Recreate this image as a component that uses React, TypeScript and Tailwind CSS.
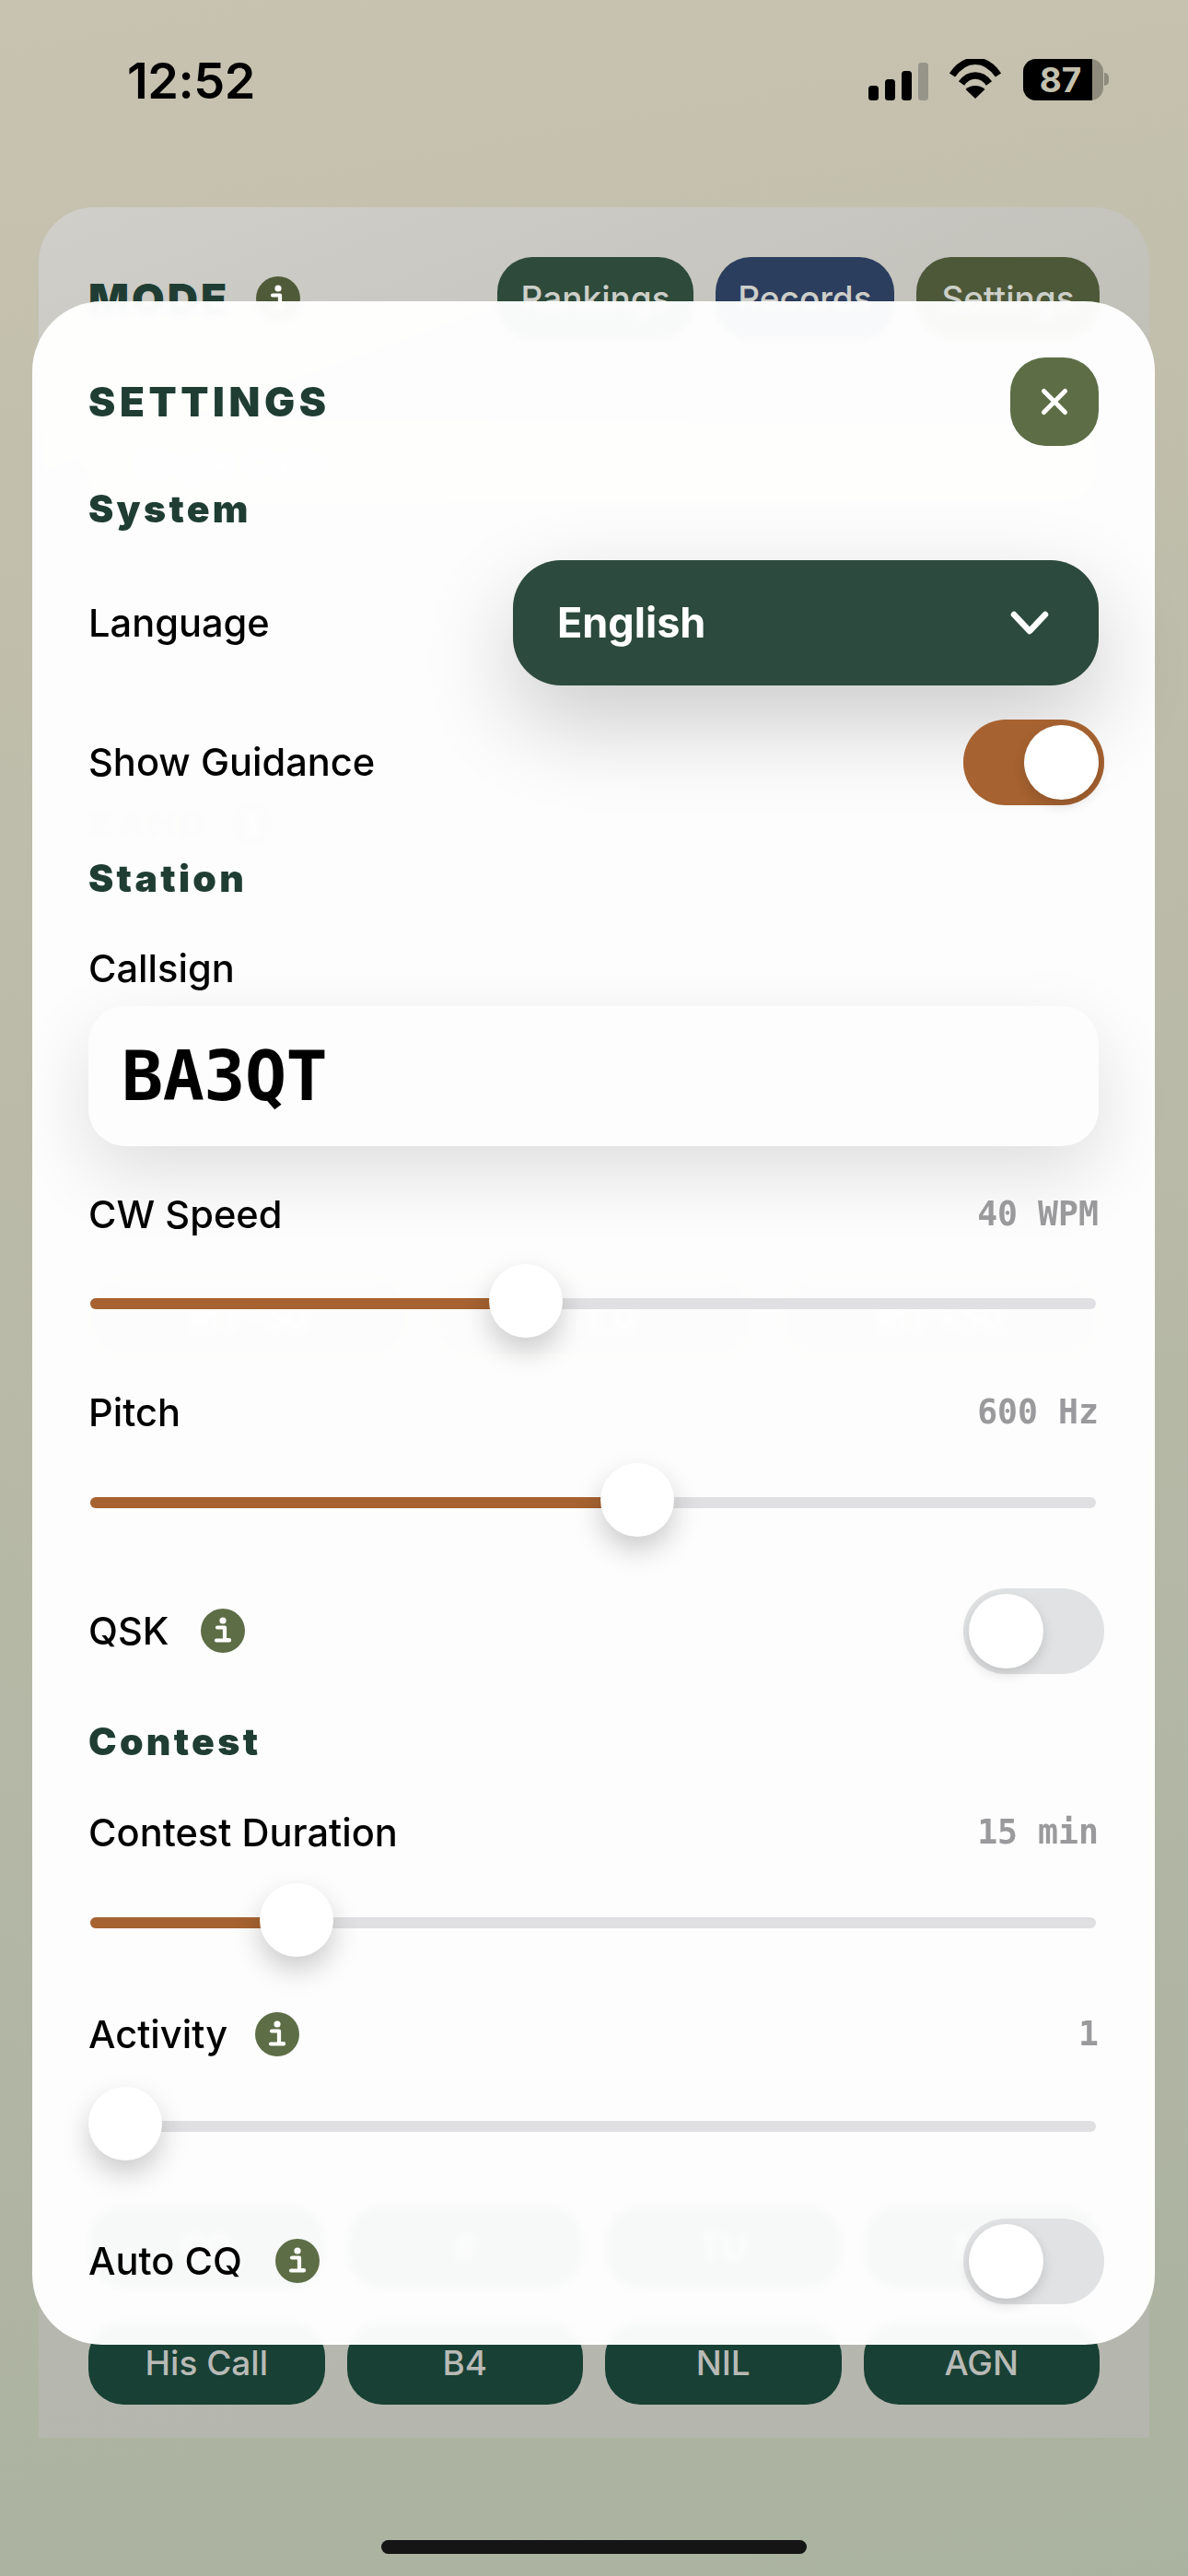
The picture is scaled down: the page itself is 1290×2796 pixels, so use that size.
const sans = "font-['Inter','Noto_Sans',sans-serif]";

function InfoIcon({ size = 48, color = "#5d6e47" }: { size?: number; color?: string }) {
  return (
    <svg width={size} height={size} viewBox="0 0 48 48" className="shrink-0">
      <circle cx="24" cy="24" r="24" fill={color} />
      <circle cx="24" cy="13" r="3.6" fill="#fff" />
      <path d="M18 20.5h8v13.5h5M17 34.5h14" stroke="#fff" strokeWidth="4.2" fill="none" strokeLinecap="round" strokeLinejoin="round" />
    </svg>
  );
}

function Toggle({ on }: { on?: boolean }) {
  return (
    <div
      className={`flex h-[93px] w-[153px] shrink-0 -mr-[6px] items-center rounded-[46px] px-[6px] ${
        on ? "justify-end bg-[#a66230]" : "justify-start bg-[#e1e2e3]"
      }`}
    >
      <div className="h-[81px] w-[81px] rounded-full bg-white shadow-[0_6px_14px_rgba(0,0,0,0.14)]" />
    </div>
  );
}

function Slider({ value, className }: { value: number; className?: string }) {
  const left = value * 1018;
  return (
    <div className={`relative h-[80px] ${className}`}>
      <div className="absolute left-[2px] right-[3px] top-[37px] h-[12px] overflow-hidden rounded-full bg-[#e0e0e2]">
        <div className="h-full bg-[#a66230]" style={{ width: left + 38 }} />
      </div>
      <div
        className="absolute top-0 h-[80px] w-[80px] rounded-full bg-white shadow-[0_14px_30px_rgba(0,0,0,0.2)]"
        style={{ left }}
      />
    </div>
  );
}

function SectionTitle({ children, className }: { children: React.ReactNode; className?: string }) {
  return (
    <h3 className={`h-[44px] text-[41px] font-black leading-[44px] tracking-[3.3px] text-[#1f3d33] ${className}`}>
      {children}
    </h3>
  );
}

function ValueRow({ label, value, info, className }: { label: string; value: string; info?: boolean; className?: string }) {
  return (
    <div className={`flex h-[44px] items-center justify-between ${className}`}>
      <div className="flex items-center gap-[30px]">
        <span className="text-[41.6px] font-medium leading-[44px] text-black">{label}</span>
        {info && <InfoIcon />}
      </div>
      <span className="font-['DejaVu_Sans_Mono',monospace] text-[36.5px] font-bold leading-[44px] text-[#9a9a9c]">{value}</span>
    </div>
  );
}

function StatusBar() {
  return (
    <div className="flex h-[225px] items-start justify-between pl-[138px] pr-[86px]">
      <span className="mt-[57px] text-[54px] font-semibold leading-[62px] tracking-[-0.5px] text-black">12:52</span>
      <div className="mt-[64px] flex items-start">
        <svg width="66" height="44" viewBox="0 0 66 44" className="mt-[2px]">
          <rect x="1" y="27" width="11" height="16" rx="3.5" fill="#000" />
          <rect x="19" y="20" width="11" height="23" rx="3.5" fill="#000" />
          <rect x="37" y="11" width="11" height="32" rx="3.5" fill="#000" />
          <rect x="55" y="2" width="11" height="41" rx="3.5" fill="#97958a" />
        </svg>
        <svg width="58" height="44" viewBox="0 0 58 44" className="ml-[22px]">
          <path d="M4 17.5C18-3 40-3 54 17.5" stroke="#000" strokeWidth="7.5" fill="none" />
          <path d="M14 26.5C22 15 36 15 44 26.5" stroke="#000" strokeWidth="7.5" fill="none" />
          <path d="M29 43L18.5 33C24 27.5 34 27.5 39.5 33Z" fill="#000" />
        </svg>
        <div className="relative ml-[23px] flex h-[45px] w-[87px] overflow-hidden rounded-[14px] bg-[#8e8b7c]">
          <div className="flex h-full w-[75px] items-center justify-center bg-black pl-[6px] text-[37px] font-bold leading-none text-[#c4c0ae]">
            87
          </div>
        </div>
        <div className="ml-[1px] mt-[15px] h-[14px] w-[5px] rounded-r-full bg-[#8e8b7c]" />
      </div>
    </div>
  );
}

// the app behind the sheet, only its top and bottom edges show
function BackPanel() {
  const keys = ["CQ", "#", "TU", "My"];
  const keys2 = ["His Call", "B4", "NIL", "AGN"];
  return (
    <div className="mx-[42px] h-[2421px] overflow-hidden rounded-t-[60px] bg-[linear-gradient(160deg,#d0cfca_0%,#b9b9b1_30%,#b5b6ae_100%)] px-[54px] pt-[54px]">
      <div className="flex items-center justify-between">
        <div className="flex items-center gap-[29px]">
          <span className="text-[46px] font-black tracking-[3px] text-[#1f3d33]">MODE</span>
          <InfoIcon color="#4f5a39" />
        </div>
        <div className="flex gap-[24px] text-[37px] font-medium text-[#cdcfc9]">
          <div className="flex h-[90px] w-[213px] items-center justify-center rounded-[38px] bg-[#2d4a3a]">Rankings</div>
          <div className="flex h-[90px] w-[194px] items-center justify-center rounded-[38px] bg-[#2c3e5e]">Records</div>
          <div className="flex h-[90px] w-[199px] items-center justify-center rounded-[38px] bg-[#4d5838]">Settings</div>
        </div>
      </div>
      <div className="mt-[87px] flex h-[92px] items-center rounded-[40px] bg-[#c9c9c4] pl-[48px] text-[38px] text-white">Single Calls</div>
      <div className="mt-[317px] flex items-center gap-[24px]">
        <span className="text-[40px] font-black tracking-[3px] text-[#9a9a94]">BAND</span>
        <InfoIcon color="#a0a098" />
      </div>
      <div className="mt-[46px] flex items-center justify-between text-[40px] text-[#b0b0aa]">
        <span>RX Bandwidth</span>
        <span className="font-['DejaVu_Sans_Mono',monospace] text-[36px]">500 Hz</span>
      </div>
      <div className="mt-[353px] grid grid-cols-3 gap-[28px]">
        {["RIT -50", "RIT 0", "RIT +50"].map((k) => (
          <div key={k} className="flex h-[91px] items-center justify-center rounded-[40px] bg-[#a8aaa4] text-[36px] text-white">{k}</div>
        ))}
      </div>
      <div className="mt-[919px] grid grid-cols-4 gap-[24px]">
        {keys.map((k) => (
          <div key={k} className="flex h-[90px] items-center justify-center rounded-[38px] bg-[#184034] text-[37px] font-medium text-[#b8bab6]">{k}</div>
        ))}
      </div>
      <div className="mt-[36px] grid grid-cols-4 gap-[24px]">
        {keys2.map((k) => (
          <div key={k} className="flex h-[90px] items-center justify-center rounded-[38px] bg-[#184034] text-[37px] font-medium text-[#b8bab6]">{k}</div>
        ))}
      </div>
    </div>
  );
}

export default function App() {
  return (
    <div className={`relative h-[2796px] w-[1290px] overflow-hidden bg-[linear-gradient(170deg,#c8c3b0_0%,#bebcaa_30%,#aab2a0_100%)] ${sans}`}>
      <StatusBar />
      <BackPanel />

      {/* Settings sheet */}
      <div className="absolute left-[35px] top-[327px] h-[2218px] w-[1219px] rounded-[76px] bg-white/97 px-[61px] pt-[61px] backdrop-blur-[3px]">
        <div className="flex h-[96px] items-center justify-between">
          <h2 className="text-[44px] font-black tracking-[4.6px] text-[#1f3d33]">SETTINGS</h2>
          <button className="flex h-[96px] w-[96px] items-center justify-center rounded-[38px] bg-[#5d6e47]">
            <svg width="32" height="32" viewBox="0 0 32 32">
              <path d="M4.5 4.5l23 23M27.5 4.5l-23 23" stroke="#fff" strokeWidth="5" strokeLinecap="round" />
            </svg>
          </button>
        </div>

        <SectionTitle className="mt-[46px]">System</SectionTitle>

        <div className="mt-[34px] flex h-[136px] items-center justify-between">
          <span className="text-[41.6px] font-medium text-black">Language</span>
          <div className="flex h-[136px] w-[636px] items-center justify-between rounded-[52px] bg-[#2c4a3d] pl-[48px] pr-[54px] shadow-[0_40px_100px_rgba(0,0,0,0.2)]">
            <span className="text-[45px] font-bold text-white">English</span>
            <svg width="42" height="28" viewBox="0 0 42 28">
              <path d="M4 5l17 18L38 5" stroke="#fff" strokeWidth="6.5" fill="none" strokeLinecap="round" strokeLinejoin="round" />
            </svg>
          </div>
        </div>

        <div className="mt-[37px] flex h-[93px] items-center justify-between">
          <span className="text-[41.6px] font-medium text-black">Show Guidance</span>
          <Toggle on />
        </div>

        <SectionTitle className="mt-[57px]">Station</SectionTitle>

        <div className="mt-[54px] h-[44px] text-[41.6px] font-medium leading-[44px] text-black">Callsign</div>

        <div className="mt-[19px] flex h-[152px] items-center rounded-[40px] bg-[#fdfdfd] pl-[36px] shadow-[0_30px_80px_rgba(0,0,0,0.12)]">
          <span className="font-['DejaVu_Sans_Mono',monospace] text-[75px] font-bold tracking-[-0.5px] text-black">BA3QT</span>
        </div>

        <ValueRow label="CW Speed" value="40 WPM" className="mt-[52px]" />
        <Slider value={0.427} className="mt-[32px]" />

        <ValueRow label="Pitch" value="600 Hz" className="mt-[59px]" />
        <Slider value={0.546} className="mt-[33px]" />

        <div className="mt-[56px] flex h-[93px] items-center justify-between">
          <div className="flex items-center gap-[35px]">
            <span className="text-[41.6px] font-medium text-black">QSK</span>
            <InfoIcon />
          </div>
          <Toggle />
        </div>

        <SectionTitle className="mt-[51px]">Contest</SectionTitle>

        <ValueRow label="Contest Duration" value="15 min" className="mt-[55px]" />
        <Slider value={0.183} className="mt-[33px]" />

        <ValueRow label="Activity" value="1" info className="mt-[62px]" />
        <Slider value={0} className="mt-[35px]" />

        <div className="mt-[63px] flex h-[93px] items-center justify-between">
          <div className="flex items-center gap-[36px]">
            <span className="text-[41.6px] font-medium text-black">Auto CQ</span>
            <InfoIcon />
          </div>
          <Toggle />
        </div>
      </div>

      <div className="absolute bottom-[24px] left-[414px] h-[15px] w-[462px] rounded-full bg-[#151515]" />
    </div>
  );
}
